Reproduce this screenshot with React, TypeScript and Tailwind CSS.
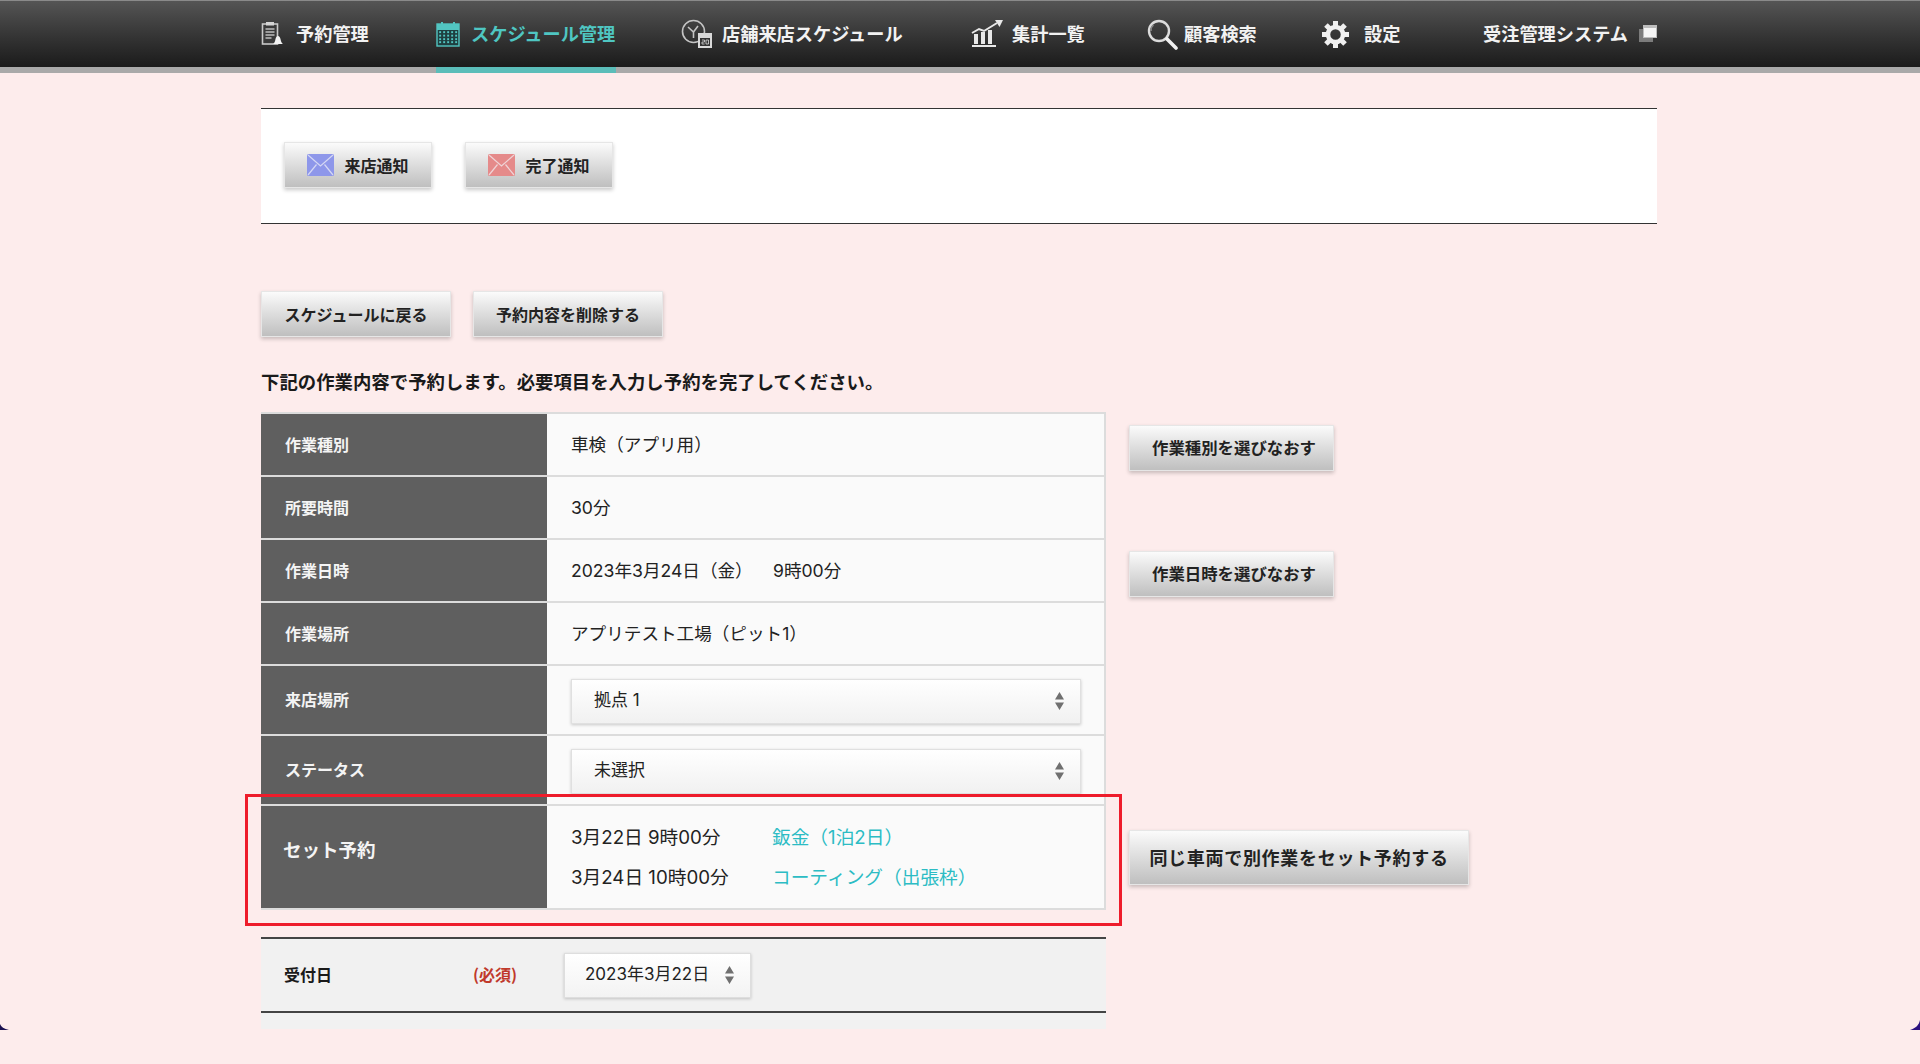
import type { ReactNode } from "react";

const font = "font-['Noto_Sans_CJK_JP','Liberation_Sans',sans-serif]";
const valueFont = "font-['Inter','Noto_Sans_CJK_JP',sans-serif]";

function ClipboardIcon() {
  return (
    <svg width="26" height="26" viewBox="0 0 26 26" fill="none">
      <rect x="1.5" y="3" width="15" height="20" fill="#3a3a3a" stroke="#c9c9c9" strokeWidth="1.6" />
      <rect x="5" y="1" width="8" height="3.5" fill="#d5d5d5" />
      <path d="M4.5 8h9M4.5 11h9M4.5 14h9M4.5 17h6" stroke="#bdbdbd" strokeWidth="1.4" />
      <path d="M12 23c1.5-1 2-2.500 2.500-5 .4-2 1.500-3 2.500-3s2.100 1 2.500 3c.5 2.500 1 4 2.500 5z" fill="#f2f2f2" />
    </svg>
  );
}

function CalendarIcon() {
  return (
    <svg width="24" height="26" viewBox="0 0 24 26" fill="none">
      <rect x="1" y="3" width="22" height="22" fill="#1f3f40" stroke="#52c5c1" strokeWidth="1.4" />
      <rect x="1" y="3" width="22" height="6" fill="#52c5c1" />
      <rect x="5" y="1" width="2" height="3" fill="#52c5c1" />
      <rect x="17" y="1" width="2" height="3" fill="#52c5c1" />
      {[11, 14.500, 18, 21].map((y) =>
        [4, 8, 12, 16, 20].map((x) => (
          <rect key={`${x}-${y}`} x={x - 0.8} y={y - 0.8} width="1.9" height="1.9" fill="#52c5c1" />
        )),
      )}
    </svg>
  );
}

function ClockCalendarIcon() {
  return (
    <svg width="32" height="30" viewBox="0 0 32 30" fill="none">
      <circle cx="12.500" cy="12.500" r="11" stroke="#c4c4c4" strokeWidth="1.600" />
      <path d="M7 8l5.500 5 4.500-6M12.500 13v6" stroke="#c4c4c4" strokeWidth="1.600" />
      <rect x="17" y="14" width="14" height="15" fill="#d9d9d9" />
      <rect x="19" y="19" width="10" height="8" fill="#333" />
      <path d="M21 21h2.500v2H21v2h2.500M25 21h2.500v4H25z" stroke="#d9d9d9" strokeWidth="0.800" />
    </svg>
  );
}

function ChartIcon() {
  return (
    <svg width="32" height="28" viewBox="0 0 32 28" fill="none">
      <path d="M1 27h24v-2H1z" fill="#e8e8e8" />
      <path d="M3 24V14h4v10zM10 24V12h4v12zM17 24V10h4v14z" fill="#e8e8e8" />
      <path d="M1 13l7-4 5 2 13-8" stroke="#e8e8e8" strokeWidth="2" />
      <path d="M24 0h8l-3.500 7z" fill="#e8e8e8" />
    </svg>
  );
}

function SearchIcon() {
  return (
    <svg width="31" height="31" viewBox="0 0 31 31" fill="none">
      <circle cx="12" cy="12" r="10" stroke="#dcdcdc" strokeWidth="2.400" />
      <path d="M4 12c0-3 1-5 2.500-6" stroke="#8a8a8a" strokeWidth="1.500" />
      <path d="M20 20l9 9" stroke="#f0f0f0" strokeWidth="3.600" strokeLinecap="round" />
    </svg>
  );
}

function GearIcon() {
  return (
    <svg width="27" height="27" viewBox="0 0 27 27" fill="none">
      <circle cx="13.500" cy="13.500" r="7.500" stroke="#f0f0f0" strokeWidth="4.500" />
      {[0, 45, 90, 135, 180, 225, 270, 315].map((a) => (
        <rect key={a} x="11" y="0" width="5" height="5" fill="#f0f0f0" transform={`rotate(${a} 13.500 13.500)`} />
      ))}
    </svg>
  );
}

function WindowsIcon() {
  return (
    <svg width="18" height="17" viewBox="0 0 18 17">
      <rect x="0" y="4" width="14" height="13" fill="#7c7c7c" />
      <rect x="4" y="0" width="14" height="13" fill="#bdbdbd" />
      <rect x="5" y="3" width="12" height="9" fill="#f5f5f5" />
    </svg>
  );
}

function MailIcon({ color }: { color: string }) {
  return (
    <svg width="27" height="22" viewBox="0 0 27 22">
      <rect x="0" y="0" width="27" height="22" rx="1.500" fill={color} />
      <path d="M1 1l12.500 11L26 1M1 21l8.500-10.500M26 21l-8.500-10.500" fill="none" stroke="#f4f4f8" strokeOpacity="0.7" strokeWidth="1.200" />
    </svg>
  );
}

function Arrows() {
  return (
    <svg width="9" height="18" viewBox="0 0 9 18" className="shrink-0">
      <path d="M4.500 0L9 7.500H0zM4.500 18L0 10.500h9z" fill="#707070" />
    </svg>
  );
}

function NavItem({
  icon,
  label,
  gap,
  width,
  active,
}: {
  icon?: ReactNode;
  label: string;
  gap: string;
  width: string;
  active?: boolean;
}) {
  return (
    <div className={`relative flex h-full items-center ${gap} ${width}`}>
      {icon}
      <span className={`text-[18.200px] font-bold whitespace-nowrap ${active ? "text-[#4fc6c2]" : "text-[#f2f2f2]"}`}>{label}</span>
      {active && <div className="absolute bottom-[-6px] left-0 h-[6px] w-full bg-[#5bbdb9]" />}
    </div>
  );
}

function Button({ children, className }: { children: ReactNode; className: string }) {
  return (
    <div
      className={`flex items-center justify-center whitespace-nowrap border border-[#e6e6e6] bg-gradient-to-b from-[#fbfbfb] to-[#bfbfbf] font-bold text-[#222] shadow-[0_2px_4px_rgba(0,0,0,0.22)] ${className}`}
    >
      {children}
    </div>
  );
}

function Row({
  label,
  height,
  large,
  action,
  children,
}: {
  label: string;
  height: string;
  large?: boolean;
  action?: ReactNode;
  children: ReactNode;
}) {
  return (
    <div className="flex items-center">
      <div className={`flex w-[845px] border-b-2 border-[#dcdcdc] ${height}`}>
        <div
          className={`flex w-[286px] shrink-0 items-center bg-[#5f5f5f] font-bold text-[#f4f4f4] ${
            large ? "pb-[14px] pl-[22px] text-[18.500px]" : "pb-[2px] pl-[24px] text-[16px]"
          }`}
        >
          {label}
        </div>
        <div className={`flex flex-1 flex-col justify-center border-r-2 border-[#dcdcdc] bg-[#fafafa] pt-[2px] pl-[24px] text-[17.600px] text-[#222] ${valueFont}`}>
          {children}
        </div>
      </div>
      {action}
    </div>
  );
}

function SelectBox({ value }: { value: string }) {
  return (
    <div className="flex h-[45px] w-[510px] items-center justify-between border border-[#e0e0e0] bg-gradient-to-b from-white to-[#f1f1f1] pr-[16px] pl-[22px] text-[17px] text-[#222] shadow-[0_1px_3px_rgba(0,0,0,0.2)]">
      <span>{value}</span>
      <Arrows />
    </div>
  );
}

export default function App() {
  return (
    <div className={`relative h-[1064px] overflow-hidden bg-[#fdecec] ${font}`}>
      <header className="border-b-[6px] border-[#a9a9a9]">
        <nav className="flex h-[67px] items-center border-t border-t-[#8a8a8a] bg-gradient-to-b from-[#555555] to-[#1b1b1b] pl-[261px]">
          <NavItem icon={<ClipboardIcon />} label="予約管理" gap="gap-[9px]" width="w-[175px]" />
          <NavItem icon={<CalendarIcon />} label="スケジュール管理" gap="gap-[11px]" width="w-[180px]" active />
          <div className="w-[65px]" />
          <NavItem icon={<ClockCalendarIcon />} label="店舗来店スケジュール" gap="gap-[9px]" width="w-[290px]" />
          <NavItem icon={<ChartIcon />} label="集計一覧" gap="gap-[9px]" width="w-[176px]" />
          <NavItem icon={<SearchIcon />} label="顧客検索" gap="gap-[6px]" width="w-[175px]" />
          <NavItem icon={<GearIcon />} label="設定" gap="gap-[15px]" width="w-[161px]" />
          <div className="flex items-center gap-[11px]">
            <span className="text-[18.200px] font-bold whitespace-nowrap text-[#f2f2f2]">受注管理システム</span>
            <WindowsIcon />
          </div>
        </nav>
      </header>

      <main className="ml-[261px] w-[1396px] pt-[35px]">
        <section className="flex h-[116px] items-center gap-[33px] border-y border-[#333] bg-white pb-[3px] pl-[23px]">
          <Button className="h-[46px] w-[148px] gap-[10px] text-[16px]">
            <MailIcon color="#8e97ea" />
            来店通知
          </Button>
          <Button className="h-[46px] w-[148px] gap-[10px] text-[16px]">
            <MailIcon color="#e58a8a" />
            完了通知
          </Button>
        </section>

        <div className="mt-[67px] flex gap-[22px]">
          <Button className="h-[46px] w-[190px] text-[16px]">スケジュールに戻る</Button>
          <Button className="h-[46px] w-[190px] text-[16px]">予約内容を削除する</Button>
        </div>

        <p className="mt-[31px] text-[18.400px] leading-[27px] font-bold text-[#1a1a1a]">
          下記の作業内容で予約します。必要項目を入力し予約を完了してください。
        </p>

        <div className="relative mt-[17px]">
          <div className="w-[845px] border-t-2 border-[#dcdcdc]" />
          <Row
            label="作業種別"
            height="h-[63px]"
            action={<Button className="mt-[4px] ml-[23px] h-[46px] w-[205px] pl-[5px] text-[16.400px]">作業種別を選びなおす</Button>}
          >
            車検（アプリ用）
          </Row>
          <Row label="所要時間" height="h-[63px]">
            30分
          </Row>
          <Row
            label="作業日時"
            height="h-[63px]"
            action={<Button className="mt-[4px] ml-[23px] h-[46px] w-[205px] pl-[5px] text-[16.400px]">作業日時を選びなおす</Button>}
          >
            <div className="flex">
              <span className="w-[202px]">2023年3月24日（金）</span>
              <span>9時00分</span>
            </div>
          </Row>
          <Row label="作業場所" height="h-[63px]">
            アプリテスト工場（ピット1）
          </Row>
          <Row label="来店場所" height="h-[70px]">
            <SelectBox value="拠点 1" />
          </Row>
          <Row label="ステータス" height="h-[70px]">
            <SelectBox value="未選択" />
          </Row>
          <Row
            label="セット予約"
            height="h-[104px]"
            large
            action={<Button className="mb-[2px] ml-[23px] h-[55px] w-[340px] text-[18px] tracking-[0.700px]">同じ車両で別作業をセット予約する</Button>}
          >
            <div className="flex flex-col gap-[13px] pb-[2px] text-[18.700px] leading-[27px]">
              <div className="flex">
                <span className="w-[201px]">3月22日 9時00分</span>
                <span className="text-[#2cbcc4]">鈑金（1泊2日）</span>
              </div>
              <div className="flex">
                <span className="w-[201px]">3月24日 10時00分</span>
                <span className="text-[#2cbcc4]">コーティング（出張枠）</span>
              </div>
            </div>
          </Row>
          {/* 赤枠の注釈 */}
          <div className="pointer-events-none absolute top-[382px] left-[-16px] h-[132px] w-[877px] border-[3px] border-[#ee1c2b]" />
        </div>

        <section className="mt-[27px] w-[845px] bg-[#f1f1f1] pb-[16px]">
          <div className={`flex h-[76px] items-center border-y-2 border-[#444] pl-[23px] text-[16px] font-bold ${font}`}>
            <span className="w-[189px] pb-[2px] text-[#1a1a1a]">受付日</span>
            <span className="w-[91px] pb-[2px] text-[#c0392b]">(必須)</span>
            <div className={`flex h-[45px] w-[187px] items-center justify-between border border-[#dedede] bg-gradient-to-b from-white to-[#f3f3f3] pr-[16px] pl-[20px] text-[17px] font-normal text-[#222] shadow-[0_1px_3px_rgba(0,0,0,0.2)] ${valueFont}`}>
              <span className="whitespace-nowrap">2023年3月22日</span>
              <Arrows />
            </div>
          </div>
        </section>
      </main>

      {/* ウィンドウ角の切れ端 */}
      <svg className="absolute top-[1018px] left-0" width="10" height="12" viewBox="0 0 10 12">
        <path d="M0 6c1 3 4 5 9 6H0z" fill="#1a1050" />
      </svg>
      <svg className="absolute top-[1018px] right-0" width="10" height="12" viewBox="0 0 10 12">
        <path d="M10 2c-1 5-4 8-10 10h10z" fill="#2b1080" />
      </svg>
    </div>
  );
}
